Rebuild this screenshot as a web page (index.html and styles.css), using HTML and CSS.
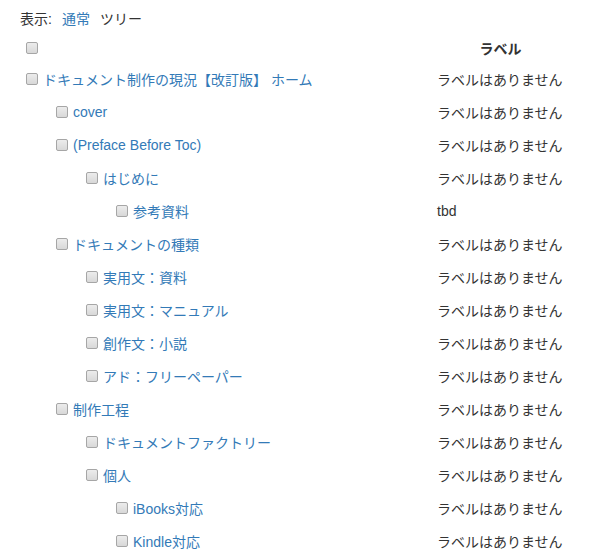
FILE: index.html
```html
<!DOCTYPE html>
<html lang="ja">
<head>
<meta charset="utf-8">
<link rel="stylesheet" href="styles.css">
</head>
<body>
<div class="page">
  <div class="view"><span>表示:</span><a class="link" href="#">通常</a><span class="current">ツリー</span></div>
  <div class="tree">
    <div class="row head">
      <div class="name"><span class="cb"></span></div>
      <div class="label th">ラベル</div>
    </div>
    <div class="row"><div class="name l0"><span class="cb"></span><a class="link" href="#">ドキュメント制作の現況【改訂版】 ホーム</a></div><div class="label">ラベルはありません</div></div>
    <div class="row"><div class="name l1"><span class="cb"></span><a class="link" href="#">cover</a></div><div class="label">ラベルはありません</div></div>
    <div class="row"><div class="name l1"><span class="cb"></span><a class="link" href="#">(Preface Before Toc)</a></div><div class="label">ラベルはありません</div></div>
    <div class="row"><div class="name l2"><span class="cb"></span><a class="link" href="#">はじめに</a></div><div class="label">ラベルはありません</div></div>
    <div class="row"><div class="name l3"><span class="cb"></span><a class="link" href="#">参考資料</a></div><div class="label">tbd</div></div>
    <div class="row"><div class="name l1"><span class="cb"></span><a class="link" href="#">ドキュメントの種類</a></div><div class="label">ラベルはありません</div></div>
    <div class="row"><div class="name l2"><span class="cb"></span><a class="link" href="#">実用文：資料</a></div><div class="label">ラベルはありません</div></div>
    <div class="row"><div class="name l2"><span class="cb"></span><a class="link" href="#">実用文：マニュアル</a></div><div class="label">ラベルはありません</div></div>
    <div class="row"><div class="name l2"><span class="cb"></span><a class="link" href="#">創作文：小説</a></div><div class="label">ラベルはありません</div></div>
    <div class="row"><div class="name l2"><span class="cb"></span><a class="link" href="#">アド：フリーペーパー</a></div><div class="label">ラベルはありません</div></div>
    <div class="row"><div class="name l1"><span class="cb"></span><a class="link" href="#">制作工程</a></div><div class="label">ラベルはありません</div></div>
    <div class="row"><div class="name l2"><span class="cb"></span><a class="link" href="#">ドキュメントファクトリー</a></div><div class="label">ラベルはありません</div></div>
    <div class="row"><div class="name l2"><span class="cb"></span><a class="link" href="#">個人</a></div><div class="label">ラベルはありません</div></div>
    <div class="row"><div class="name l3"><span class="cb"></span><a class="link" href="#">iBooks対応</a></div><div class="label">ラベルはありません</div></div>
    <div class="row"><div class="name l3"><span class="cb"></span><a class="link" href="#">Kindle対応</a></div><div class="label">ラベルはありません</div></div>
  </div>
</div>
</body>
</html>
```
FILE: styles.css
```css
html, body {
  margin: 0;
  padding: 0;
  background: #fff;
}
body {
  font-family: "Liberation Sans", "Noto Sans CJK JP", sans-serif;
  font-size: 14px;
  color: #333;
}
.page {
  padding: 9px 0 0 20px;
}
.view {
  display: flex;
  gap: 10px;
  height: 20px;
  line-height: 20px;
}
.link {
  color: #337ab7;
  text-decoration: none;
}
.current {
  color: #333;
}
.tree {
  margin-top: 5px;
}
.row {
  display: grid;
  grid-template-columns: 417px 127px;
  height: 33px;
  align-items: center;
}
.row.head {
  height: 28px;
}
.name {
  display: flex;
  align-items: center;
  gap: 5px;
  padding-left: 6px;
  white-space: nowrap;
}
.name.l1 { padding-left: 36px; }
.name.l2 { padding-left: 66px; }
.name.l3 { padding-left: 96px; }
.label {
  white-space: nowrap;
}
.th {
  font-weight: bold;
  text-align: center;
}
.cb {
  display: inline-block;
  width: 10px;
  height: 10px;
  border: 1px solid #a6a6a6;
  border-radius: 2px;
  background: linear-gradient(#ececec, #d8d8d8);
  flex: none;
}
```
